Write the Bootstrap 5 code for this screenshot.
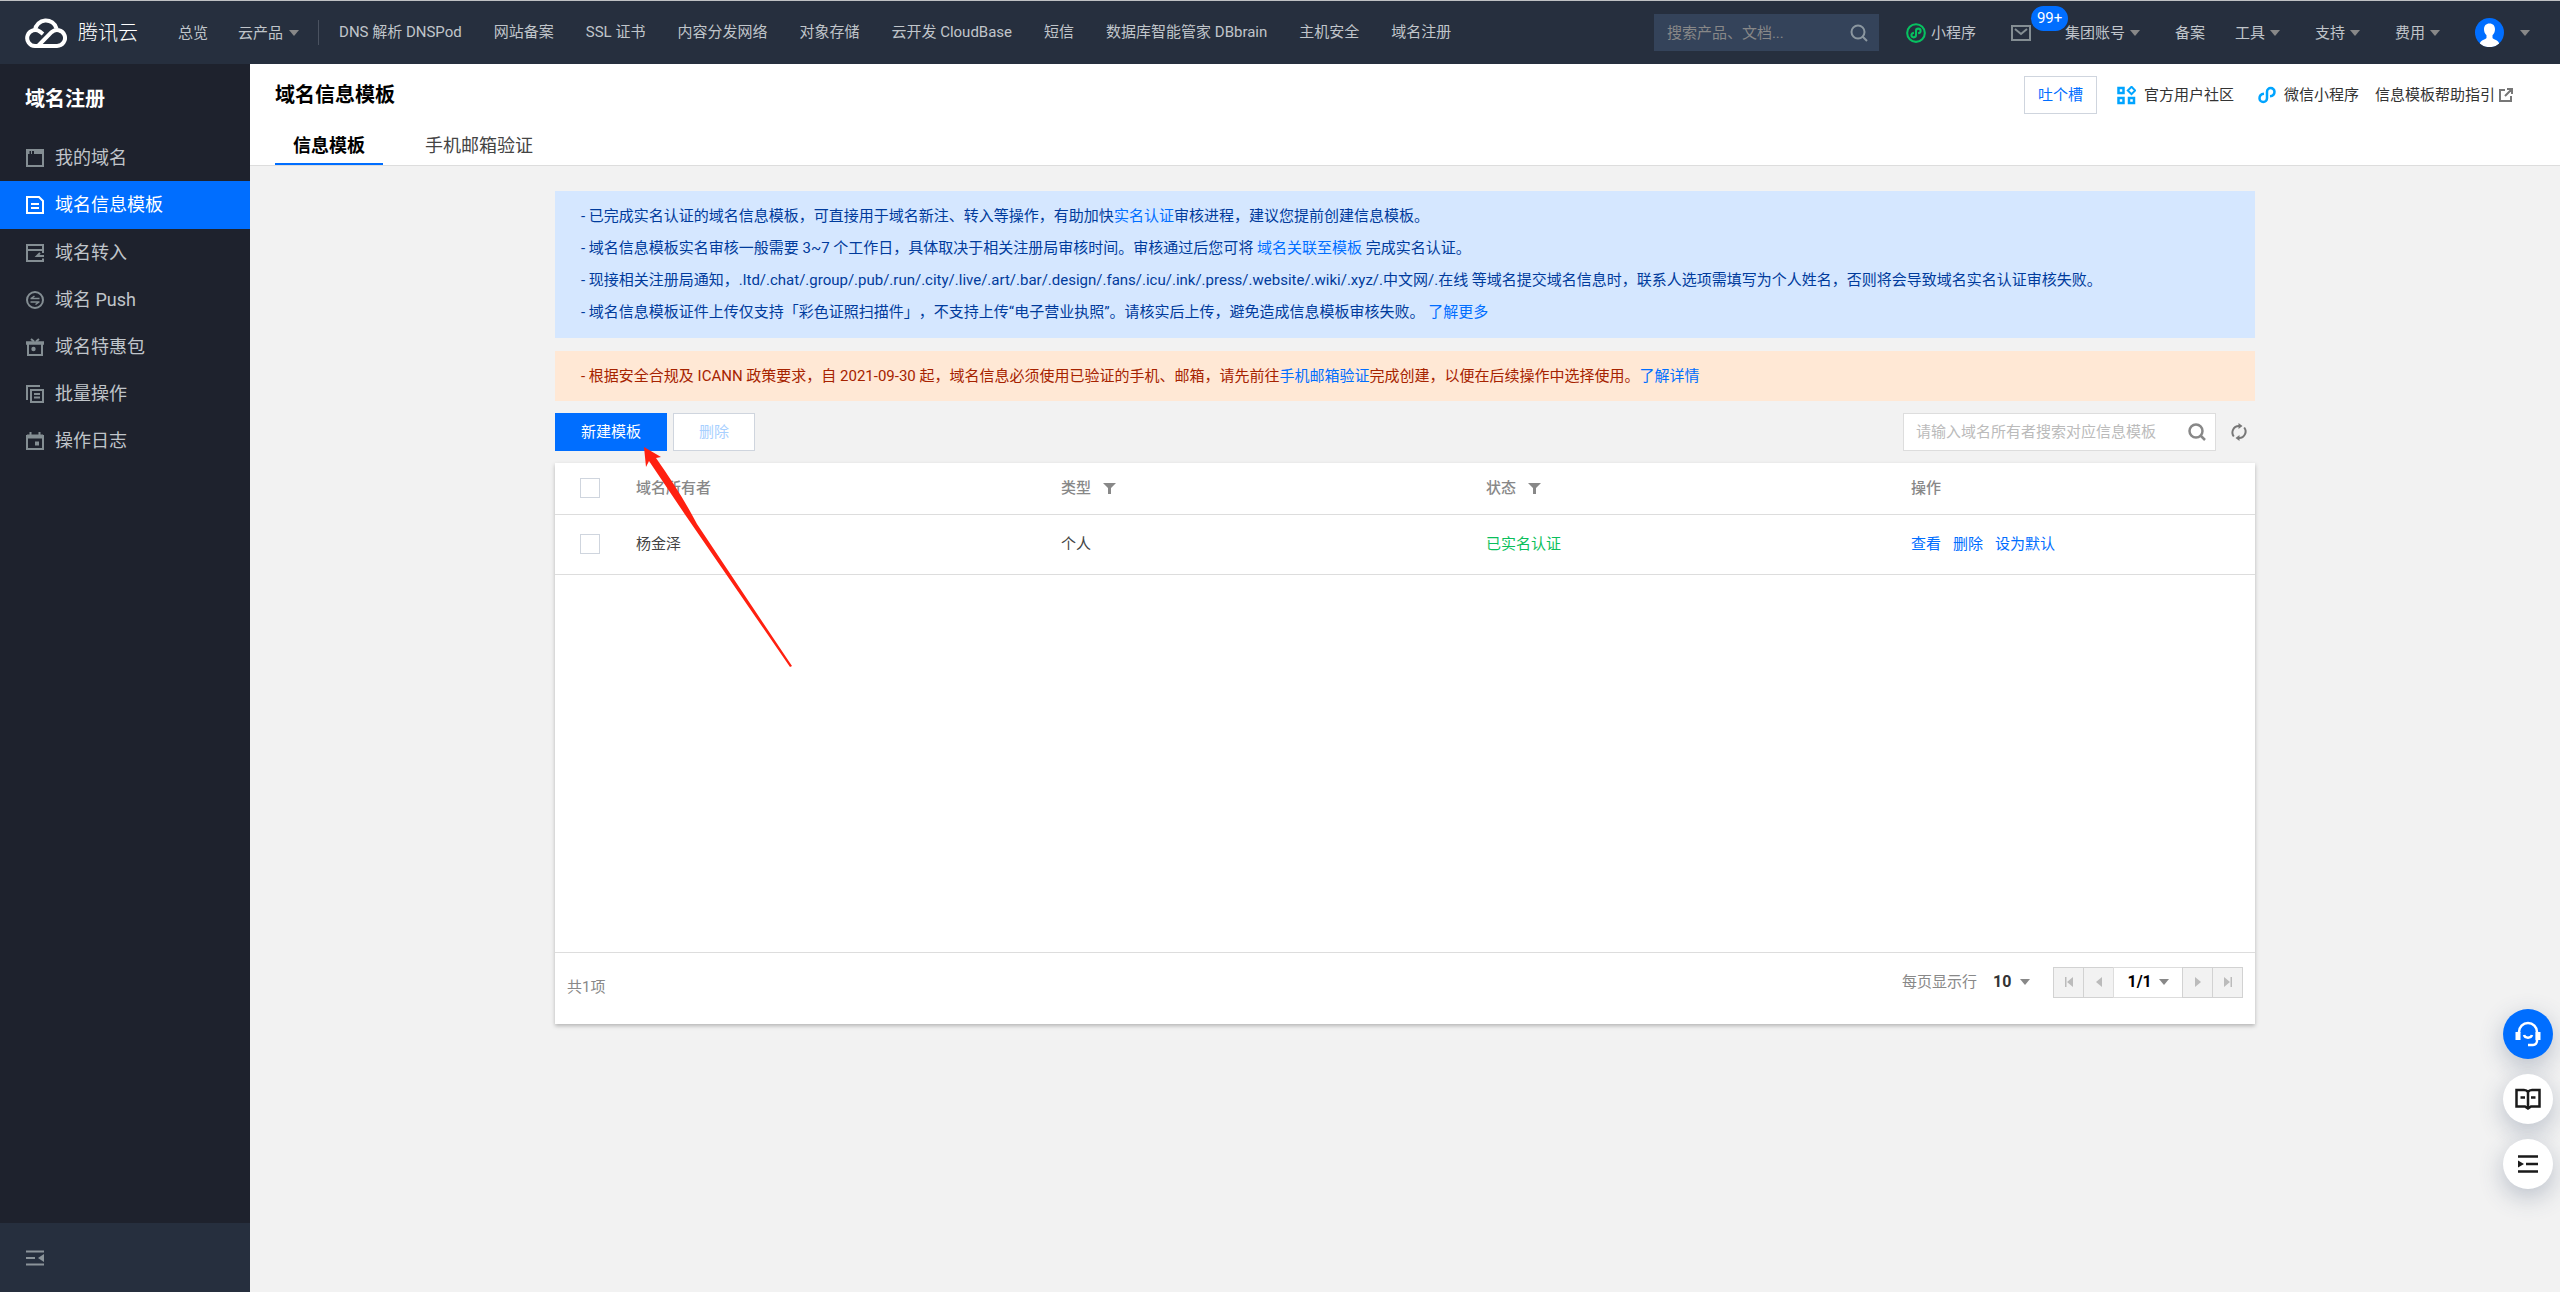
<!DOCTYPE html>
<html lang="zh-CN">
<head>
<meta charset="utf-8">
<meta name="viewport" content="width=device-width, initial-scale=1">
<title>域名信息模板 - 域名注册 - 腾讯云</title>
<link href="https://cdn.jsdelivr.net/npm/bootstrap@5.3.0/dist/css/bootstrap.min.css" rel="stylesheet">
<style>
  :root { --tc-blue: #006eff; --tc-dark: #262f3e; --tc-side: #1e222d; --tc-line: #ddd; }
  body { font-family: Roboto, "Noto Sans CJK SC", sans-serif; font-size: 15px; line-height: 22px; color: #444; background: #f2f2f2; text-spacing-trim: space-all; }
  a { color: var(--tc-blue); text-decoration: none; }
  svg { display: block; flex: none; }

  /* top bar */
  .topbar { height: 64px; background: var(--tc-dark); border-top: 1px solid #bfc1c3; padding: 0 30px 0 25px; color: #bbc1c7; }
  .topbar a { color: #c0c5ca; white-space: nowrap; }
  .brand { gap: 11px; color: #fff !important; font-size: 20px; font-weight: 300; margin-right: 25px; }
  .topnav a { padding: 0 15px; }
  .topnav .with-tri { gap: 6px; }
  .topnav.products { padding-bottom: 2px; }
  .topnav.products a { padding: 0 16px; }
  .rule { width: 1px; height: 25px; background: #4a5260; margin: 0 4px; }
  .tri { width: 0; height: 0; flex: none; border: 5px solid transparent; border-top: 6px solid #888; border-bottom: 0; }
  .topright { gap: 30px; }
  .topright .with-tri { gap: 5px; padding-right: 5px; }
  .topsearch { width: 225px; height: 37px; background: #34435a; padding: 0 11px 0 13px; color: #8b97a0; margin-right: -3px; }
  .topsearch input { color: #c0c5ca; }
  .bare { border: 0; background: transparent; outline: 0; padding: 0; min-width: 0; flex: 1; }
  .topsearch input::placeholder { color: #888; }
  .count { position: absolute; left: 20px; top: -19px; height: 25px; line-height: 25px; padding: 0 6px; border-radius: 13px; background: var(--tc-blue); color: #fff; }

  /* side bar */
  .side { width: 250px; background: var(--tc-side); }
  .side h2 { font-size: 20px; line-height: 28px; font-weight: 700; color: #fff; padding: 21px 25px; margin: 0; }
  .side .nav-link { height: 47px; padding: 0 26px; gap: 11px; font-size: 18px; color: #c0c5ca; border-radius: 0; }
  .side .nav-link svg { color: #848e93; }
  .side .nav-link.active { height: 48px; background: var(--tc-blue); color: #fff; }
  .side .nav-link.active svg { color: #fff; }
  .side-foot { height: 69px; background: var(--tc-dark); color: #8b949a; padding: 0 26px; border: 0; }

  /* page head */
  .page-head { background: #fff; border-bottom: 1px solid var(--tc-line); padding: 12px 47px 0 25px; }
  .page-head h1 { font-size: 20px; line-height: 28px; font-weight: 700; color: #000; margin: 0; }
  .head-links a { color: #333; }
  .btn-flat { --bs-btn-border-radius: 0; --bs-btn-font-size: 15px; --bs-btn-line-height: 22px; height: 38px; padding: 0 13px; }
  .btn-line { background: #fff; border: 1px solid #cfd5de; color: var(--tc-blue); }
  .btn-line:disabled { background: #fff; border-color: #cfd5de; color: #a8d0ff; opacity: 1; }
  .btn-main { background: var(--tc-blue); color: #fff; border: 0; padding: 0 26px; }
  .btn-del { padding: 0 25px; margin-left: 6px; }
  .page-tabs { font-size: 18px; gap: 24px; }
  .page-tabs a { color: #444; padding: 18px 18px 0; line-height: 28px; height: 51px; }
  .page-tabs a.active { color: #000; font-weight: 700; border-bottom: 2px solid var(--tc-blue); }

  /* content */
  .content { max-width: 1700px; width: 100%; margin: 25px auto 0; }
  .tip { line-height: 22px; border: 0; border-radius: 0; padding: 14px 26px; }
  .tip-info { background: #d5e7ff; color: #003b9c; margin-bottom: 13px; display: grid; gap: 10px; padding: 14px 26px 15px; }
  .tip-warn { background: #ffe8d5; color: #a62300; margin-bottom: 12px; }
  .gridsearch { width: 313px; height: 38px; background: #fff; border: 1px solid var(--tc-line); padding: 0 9px 0 12px; color: #888; }
  .gridsearch input::placeholder { color: #bbb; opacity: 1; }
  .refresh { margin: 0 7px 0 14px; }
  .arrow { position: absolute; left: 89px; top: 34px; z-index: 2; pointer-events: none; }
  .panel { background: #fff; box-shadow: 0 2px 4px rgba(0,0,0,.25); margin-top: 12px; }
  .grid { table-layout: fixed; margin: 0; --bs-table-color: #444; }
  .grid th, .grid td { padding: 0 12px; height: 60px; border-bottom: 1px solid var(--tc-line); vertical-align: middle; }
  .grid th { height: 51px; font-weight: 500; color: #888; }
  .grid .pick { width: 69px; padding-left: 25px; }
  .grid .verified { color: #0abf5b; }
  .grid .form-check-input { width: 20px; height: 20px; margin: 0; display: block; border-radius: 0; border: 1px solid #cfd5de; }
  .actions { gap: 12px; }
  .grid-body { min-height: 377px; }
  .pager { border-top: 1px solid var(--tc-line); padding: 14px 12px 26px; color: #888; }
  .pager .total { padding-top: 9px; }
  .pager select { appearance: none; border: 0; background: transparent; font-size: 16px; font-weight: 700; color: #333; padding: 0; outline: 0; }
  .pager .steps > * { height: 31px; width: 31px; border: 1px solid #d2d2d2; border-radius: 0; background: #f2f2f2; color: #bbb; padding: 0; margin-left: -1px; }
  .pager .steps > .current { width: 70px; background: #fff; border-color: var(--tc-line); gap: 6px; }
  .pager .steps select { color: #000; }

  /* floating help */
  .dock { position: fixed; right: 7px; bottom: 103px; gap: 15px; }
  .dock button { width: 50px; height: 50px; border: 0; border-radius: 50%; background: #fff; color: #1a1a1a; box-shadow: 0 8px 24px rgba(55,75,110,.3); }
  .dock button.on { background: var(--tc-blue); color: #fff; }
</style>
</head>
<body class="min-vh-100 d-flex flex-column">

<header class="topbar d-flex align-items-center">
  <a class="brand d-flex align-items-center" href="#">
    <svg width="42" height="30" viewBox="0 0 42 30" fill="none" stroke="#fff" stroke-width="4"><path d="M13 28h19a8 8 0 1 0-5.500-13.800L13 28H10a8 8 0 1 1 5-14.400l3 2.400"/><path d="M10 12a11 11 0 0 1 21.500-1.500"/></svg>
    <span>腾讯云</span>
  </a>
  <nav class="topnav d-flex align-items-center">
    <a href="#">总览</a>
    <a class="with-tri d-flex align-items-center" href="#">云产品<span class="tri"></span></a>
  </nav>
  <span class="rule"></span>
  <nav class="topnav products d-flex align-items-center">
    <a href="#">DNS 解析 DNSPod</a><a href="#">网站备案</a><a href="#">SSL 证书</a><a href="#">内容分发网络</a><a href="#">对象存储</a><a href="#">云开发 CloudBase</a><a href="#">短信</a><a href="#">数据库智能管家 DBbrain</a><a href="#">主机安全</a><a href="#">域名注册</a>
  </nav>
  <div class="topright d-flex align-items-center ms-auto">
    <label class="topsearch d-flex align-items-center">
      <input class="bare" type="text" placeholder="搜索产品、文档..." aria-label="搜索产品、文档">
      <svg width="18" height="18" viewBox="0 0 18 18" fill="none" stroke="currentColor" stroke-width="2"><circle cx="8" cy="8" r="6.500"/><path d="M12.500 12.500 17 17"/></svg>
    </label>
    <a class="with-tri d-flex align-items-center" href="#">
      <svg width="20" height="20" viewBox="0 0 24 24" fill="none" stroke="#07c160" stroke-width="2.500"><circle cx="12" cy="12" r="10.600"/><path d="M14.500 12.400c1.500-.3 3-1.300 3-2.900a2.750 2.750 0 0 0-5.500 0v5a2.750 2.750 0 0 1-5.500 0c0-1.600 1.500-2.600 3-2.900"/></svg>小程序
    </a>
    <a class="position-relative me-1" href="#" aria-label="消息">
      <svg width="20" height="16" viewBox="0 0 20 16" fill="none" stroke="#848e93" stroke-width="2"><path d="M1 1h18v14H1z"/><path d="m4 4 6 5 6-5"/></svg>
      <span class="count">99+</span>
    </a>
    <a class="with-tri d-flex align-items-center" href="#">集团账号<span class="tri"></span></a>
    <a href="#">备案</a>
    <a class="with-tri d-flex align-items-center" href="#">工具<span class="tri"></span></a>
    <a class="with-tri d-flex align-items-center" href="#">支持<span class="tri"></span></a>
    <a class="with-tri d-flex align-items-center" href="#">费用<span class="tri"></span></a>
    <a class="d-flex align-items-center gap-3" href="#" aria-label="账号">
      <svg width="29" height="29" viewBox="0 0 29 29"><circle cx="14.500" cy="14.500" r="14.500" fill="#006eff"/><path d="M14.500 5.500c3.600 0 5.500 2.400 5.500 5.800 0 2.500-1 4.700-2.500 6v2.500c0 1.800 5.200 1.700 6.700 5.600a14.500 14.500 0 0 1-19.400 0c1.500-3.900 6.700-3.800 6.700-5.600v-2.500c-1.500-1.300-2.500-3.500-2.500-6 0-3.400 1.900-5.800 5.500-5.800z" fill="#fff"/></svg>
      <span class="tri"></span>
    </a>
  </div>
</header>

<div class="d-flex flex-grow-1">
  <aside class="side d-flex flex-column flex-shrink-0">
    <h2>域名注册</h2>
    <nav class="nav flex-column flex-nowrap flex-grow-1">
      <a class="nav-link d-flex align-items-center" href="#"><svg width="18" height="18" viewBox="0 0 18 18" fill="none" stroke="currentColor" stroke-width="2"><path d="M1 1h16v16H1z"/><path d="M1 3h2.500M5 3h1M8 3h9" stroke-width="4"/></svg>我的域名</a>
      <a class="nav-link active d-flex align-items-center" href="#"><svg width="18" height="18" viewBox="0 0 18 18" fill="none" stroke="currentColor" stroke-width="2"><path d="M1 1h12l4 4v12H1z"/><path d="M5 8h8M5 12h8"/></svg>域名信息模板</a>
      <a class="nav-link d-flex align-items-center" href="#"><svg width="18" height="18" viewBox="0 0 18 18" fill="none" stroke="currentColor" stroke-width="2"><path d="M17 9V1H1v16h16v-2.500M1 6h16"/><path d="M18 12h-7m3-3-3 3h4"/></svg>域名转入</a>
      <a class="nav-link d-flex align-items-center" href="#"><svg width="18" height="18" viewBox="0 0 18 18" fill="none" stroke="currentColor" stroke-width="2"><circle cx="9" cy="9" r="8"/><path d="M4.500 7.500h9M5 7.500l3.500-2.500M4.500 11h9M13 11l-3.500 2.500" stroke-width="1.500"/></svg>域名 Push</a>
      <a class="nav-link d-flex align-items-center" href="#"><svg width="18" height="18" viewBox="0 0 18 18" fill="none" stroke="currentColor" stroke-width="2"><path d="M0 5h18" stroke-width="3.500"/><path d="M2 6v11h14V6M5 1l3 2.500M13 1l-3 2.500"/><circle cx="7.500" cy="11" r="2.200" fill="currentColor" stroke="none"/></svg>域名特惠包</a>
      <a class="nav-link d-flex align-items-center" href="#"><svg width="18" height="18" viewBox="0 0 18 18" fill="none" stroke="currentColor" stroke-width="2"><path d="M1 15V1h13"/><path d="M5 5h12v12H5z"/><path d="M8 9h6M8 12.500h6"/></svg>批量操作</a>
      <a class="nav-link d-flex align-items-center" href="#"><svg width="18" height="18" viewBox="0 0 18 18" fill="none" stroke="currentColor" stroke-width="2"><path d="M1 4h16v13H1z"/><path d="M1 4.500h16" stroke-width="4"/><path d="M4.500 0v3M13.500 0v3"/><path d="M9 9.500h4v4H9z" fill="currentColor" stroke="none"/></svg>操作日志</a>
    </nav>
    <button class="side-foot d-flex align-items-center" type="button" aria-label="收起菜单"><svg width="18" height="16" viewBox="0 0 18 16" fill="none" stroke="currentColor" stroke-width="2"><path d="M0 1.500h18M0 8h9M0 14.500h18"/><path d="M18 4v8l-6-4z" fill="currentColor" stroke="none"/></svg></button>
  </aside>

  <main class="flex-grow-1">
    <div class="page-head">
      <div class="d-flex align-items-center justify-content-between">
        <h1>域名信息模板</h1>
        <div class="head-links d-flex align-items-center">
          <button class="btn btn-flat btn-line me-3" type="button">吐个槽</button>
          <a class="d-flex align-items-center gap-2 ms-1 me-4" href="#"><svg width="19" height="19" viewBox="0 0 19 19" fill="none" stroke="#00a4ff" stroke-width="2.500"><path d="M1.500 2h5v5h-5zM1.500 12h5v5h-5zM12 12h5v5h-5z"/><path d="m14.500.800 3.700 3.700-3.700 3.700-3.700-3.700z" stroke-width="2"/></svg>官方用户社区</a>
          <a class="d-flex align-items-center gap-2 me-3" href="#"><svg width="18" height="18" viewBox="0 0 18 18" fill="none" stroke="#00a4ff" stroke-width="2.500"><path d="M12 10.200c2.500-.2 4.500-1.900 4.500-4.500a3.700 3.700 0 0 0-7.500 0v6.600a3.700 3.700 0 0 1-7.500 0c0-2.600 2-4.300 4.500-4.500"/></svg>微信小程序</a>
          <a class="d-flex align-items-center gap-1" href="#">信息模板帮助指引<svg width="14" height="14" viewBox="0 0 14 14" fill="none" stroke="#777" stroke-width="2"><path d="M6 2H1v11h11V8M8 1h5v5M13 1 6 8"/></svg></a>
        </div>
      </div>
      <nav class="page-tabs d-flex">
        <a class="active" href="#">信息模板</a>
        <a href="#">手机邮箱验证</a>
      </nav>
    </div>

    <div class="content">
      <div class="alert tip tip-info">
        <div>- 已完成实名认证的域名信息模板，可直接用于域名新注、转入等操作，有助加快<a href="#">实名认证</a>审核进程，建议您提前创建信息模板。</div>
        <div>- 域名信息模板实名审核一般需要 3~7 个工作日，具体取决于相关注册局审核时间。审核通过后您可将 <a href="#">域名关联至模板</a> 完成实名认证。</div>
        <div>- 现接相关注册局通知，.ltd/.chat/.group/.pub/.run/.city/.live/.art/.bar/.design/.fans/.icu/.ink/.press/.website/.wiki/.xyz/.中文网/.在线 等域名提交域名信息时，联系人选项需填写为个人姓名，否则将会导致域名实名认证审核失败。</div>
        <div>- 域名信息模板证件上传仅支持「彩色证照扫描件」，不支持上传“电子营业执照”。请核实后上传，避免造成信息模板审核失败。 <a href="#">了解更多</a></div>
      </div>
      <div class="alert tip tip-warn">- 根据安全合规及 ICANN 政策要求，自 2021-09-30 起，域名信息必须使用已验证的手机、邮箱，请先前往<a href="#">手机邮箱验证</a>完成创建，以便在后续操作中选择使用。<a href="#">了解详情</a></div>

      <div class="position-relative d-flex align-items-center">
        <button class="btn btn-flat btn-main" type="button">新建模板</button>
        <button class="btn btn-flat btn-line btn-del" type="button" disabled>删除</button>
        <label class="gridsearch d-flex align-items-center ms-auto">
          <input class="bare" type="text" placeholder="请输入域名所有者搜索对应信息模板" aria-label="搜索信息模板">
          <svg width="18" height="18" viewBox="0 0 18 18" fill="none" stroke="currentColor" stroke-width="2.500"><circle cx="8" cy="8" r="6.500"/><path d="M12.500 12.500 17 17"/></svg>
        </label>
        <button class="btn p-0 border-0 refresh" type="button" aria-label="刷新"><svg width="18" height="18" viewBox="0 0 18 18" fill="none" stroke="#777" stroke-width="2"><path d="M3.800 13.500A6.500 6.500 0 0 1 9 3M14.200 4.500A6.500 6.500 0 0 1 9 15"/><path d="M8.500 0v6l4-3zM9.500 12v6l-4-3z" fill="#777" stroke="none"/></svg></button>
        <svg class="arrow" width="149" height="221" viewBox="0 0 149 221"><path d="M0 0 17 10 12 11C28 34 41 54 53 77L148 219 146 220 42 69 5 14 2 20z" fill="#ff2010"/></svg>
      </div>

      <section class="panel">
        <table class="table grid">
          <colgroup><col style="width:69px"><col style="width:25%"><col style="width:25%"><col style="width:25%"><col></colgroup>
          <thead>
            <tr>
              <th class="pick"><input class="form-check-input" type="checkbox" aria-label="全选"></th>
              <th>域名所有者</th>
              <th><span class="d-flex align-items-center gap-2">类型<svg class="ms-1" width="13" height="11" viewBox="0 0 13 11" fill="#888"><path d="M0 0h13L8 5v6H5V5z"/></svg></span></th>
              <th><span class="d-flex align-items-center gap-2">状态<svg class="ms-1" width="13" height="11" viewBox="0 0 13 11" fill="#888"><path d="M0 0h13L8 5v6H5V5z"/></svg></span></th>
              <th>操作</th>
            </tr>
          </thead>
          <tbody>
            <tr>
              <td class="pick"><input class="form-check-input" type="checkbox" aria-label="选择 杨金泽"></td>
              <td>杨金泽</td>
              <td>个人</td>
              <td class="verified">已实名认证</td>
              <td><span class="d-flex actions"><a href="#">查看</a><a href="#">删除</a><a href="#">设为默认</a></span></td>
            </tr>
          </tbody>
        </table>
        <div class="grid-body"></div>
        <div class="pager d-flex align-items-start justify-content-between">
          <span class="total">共1项</span>
          <div class="d-flex align-items-center">
            <label for="size" class="me-3">每页显示行</label>
            <select id="size"><option>10</option></select><span class="tri ms-2 me-4"></span>
            <div class="steps d-flex">
              <button class="d-flex align-items-center justify-content-center" type="button" aria-label="首页"><svg width="10" height="10" viewBox="0 0 10 10" fill="currentColor"><path d="M1 0h1.500v10H1zM9 0v10L3 5z"/></svg></button>
              <button class="d-flex align-items-center justify-content-center" type="button" aria-label="上一页"><svg width="10" height="10" viewBox="0 0 10 10" fill="currentColor"><path d="M8 0v10L2 5z"/></svg></button>
              <span class="current d-flex align-items-center justify-content-center"><select aria-label="页码"><option>1/1</option></select><span class="tri"></span></span>
              <button class="d-flex align-items-center justify-content-center" type="button" aria-label="下一页"><svg width="10" height="10" viewBox="0 0 10 10" fill="currentColor"><path d="M2 0v10l6-5z"/></svg></button>
              <button class="d-flex align-items-center justify-content-center" type="button" aria-label="末页"><svg width="10" height="10" viewBox="0 0 10 10" fill="currentColor"><path d="M7.500 0H9v10H7.500zM1 0v10l6-5z"/></svg></button>
            </div>
          </div>
        </div>
      </section>
    </div>
  </main>
</div>

<div class="dock d-flex flex-column">
  <button class="on d-flex align-items-center justify-content-center" type="button" aria-label="在线客服"><svg width="26" height="26" viewBox="0 0 26 26" fill="none" stroke="currentColor" stroke-width="2.500"><path d="M4 12v-1a9 9 0 0 1 18 0v8.500a4 4 0 0 1-4 4.500h-5"/><path d="M.500 11h5v8h-5zM20.500 11h5v8h-5z" fill="currentColor" stroke="none"/><path d="M9 14c1 3.500 7 3.500 8 0"/></svg></button>
  <button class="d-flex align-items-center justify-content-center" type="button" aria-label="文档"><svg width="26" height="22" viewBox="0 0 26 22" fill="none" stroke="currentColor" stroke-width="2.500"><path d="M13 4c-1-1.500-2-2-4-2H1.500v16.500H10l3 2 3-2h8.500V2H17c-2 0-3 .5-4 2zM13 4v16"/><path d="M5.500 9.500H10M16 9.500h4.500"/></svg></button>
  <button class="d-flex align-items-center justify-content-center" type="button" aria-label="展开"><svg width="22" height="18" viewBox="0 0 22 18" fill="none" stroke="currentColor" stroke-width="2.500"><path d="M1 1.500h20M9 9h12M1 16.500h20"/><path d="M1 5.500v7L7 9z" fill="currentColor" stroke="none"/></svg></button>
</div>

<script src="https://cdn.jsdelivr.net/npm/bootstrap@5.3.0/dist/js/bootstrap.bundle.min.js"></script>
</body>
</html>
